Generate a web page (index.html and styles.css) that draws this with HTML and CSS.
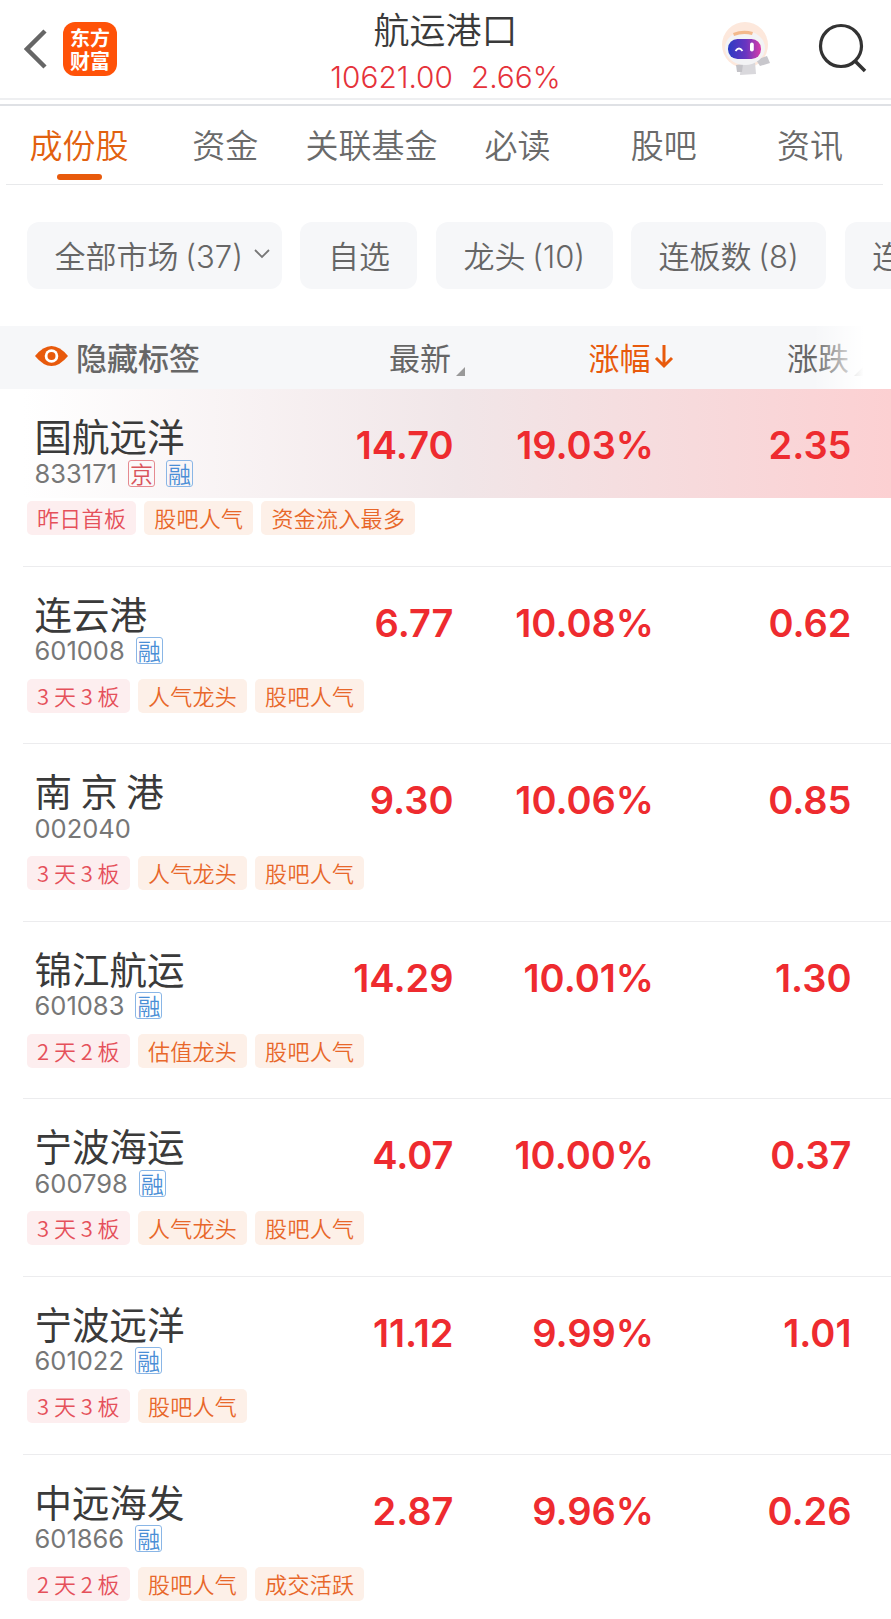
FILE: index.html
```html
<!DOCTYPE html>
<html>
  <head>
    <title>航运港口</title>
    <link rel="stylesheet" href="styles.css">
    <meta name="viewport" content="width=device-width, initial-scale=1" />
  </head>
  <body>
    <div class="header">
      <div class="header-left">
        <svg class="back" width="24" height="42" viewBox="0 0 24 42"><path d="M21 3 L3 21 L21 39" fill="none" stroke="#666" stroke-width="4.5"/></svg>
        <div class="logo"><span>东方</span><span>财富</span></div>
      </div>
      <div class="header-mid">
        <div class="title">航运港口</div>
        <div class="subtitle"><span>10621.00</span><span>2.66%</span></div>
      </div>
      <div class="header-right">
        <svg width="54" height="54" viewBox="0 0 54 54">
          <defs>
            <linearGradient id="visor" x1="0" y1="0" x2="1" y2="0">
              <stop offset="0" stop-color="#2a3bc4"/>
              <stop offset="0.55" stop-color="#6a35c0"/>
              <stop offset="1" stop-color="#d83aa8"/>
            </linearGradient>
          </defs>
          <circle cx="26" cy="23" r="23" fill="#fde8dc"/>
          <path d="M22 42 L36 40 L37 52 L21 53 Z" fill="#d9d8dc"/>
          <path d="M17 43 L24 42 L23 50 L18 50 Z" fill="#c4c3c8"/>
          <path d="M37 38 L48 34 L51 41 L41 44 Z" fill="#c8c7cc"/>
          <ellipse cx="26" cy="26" rx="20" ry="17" fill="#f3f3f5"/>
          <path d="M14 11 Q24 7 34 10 L33 13 Q24 10.500 15 14 Z" fill="#f3b98c"/>
          <rect x="9" y="17" width="33" height="20" rx="9.500" fill="url(#visor)"/>
          <path d="M16.500 29 Q20 24 23.500 29" fill="none" stroke="#fff" stroke-width="1.800"/>
          <rect x="31" y="20.500" width="3.800" height="9" rx="1.900" fill="#fff"/>
        </svg>
        <svg class="search" width="50" height="50" viewBox="0 0 50 50"><circle cx="24" cy="23" r="20.5" fill="none" stroke="#333" stroke-width="3.2"/><path d="M38 38 L48 48" stroke="#333" stroke-width="3.6"/></svg>
      </div>
    </div>
    <div class="header-line"></div>
    <div class="tabs">
      <div class="tab active">成份股<span class="tab-bar"></span></div>
      <div class="tab">资金</div>
      <div class="tab">关联基金</div>
      <div class="tab">必读</div>
      <div class="tab">股吧</div>
      <div class="tab">资讯</div>
    </div>
    <div class="pills">
      <div class="pill first">全部市场 (37)<svg class="chevron" width="18" height="10" viewBox="0 0 18 10"><path d="M2 1 L9 8 L16 1" fill="none" stroke="#777" stroke-width="1.8"/></svg></div>
      <div class="pill">自选</div>
      <div class="pill">龙头 (10)</div>
      <div class="pill">连板数 (8)</div>
      <div class="pill">连板</div>
    </div>
    <div class="thead">
      <div class="thead-name">
        <svg width="35" height="22" viewBox="0 0 35 22"><path d="M1 11 Q17.500 -9 34 11 Q17.500 31 1 11 Z" fill="#e85a0c"/><circle cx="17.500" cy="11" r="6.800" fill="#fff"/><circle cx="17.500" cy="11" r="4" fill="#e85a0c"/></svg>
        隐藏标签
      </div>
      <div class="thead-col">最新<i class="corner"></i></div>
      <div class="thead-col sorted">涨幅<svg width="20" height="26" viewBox="0 0 20 26"><path d="M10 2 V23 M2 15 L10 23 L18 15" fill="none" stroke="#e85a0c" stroke-width="3"/></svg></div>
      <div class="thead-col">涨跌<i class="corner"></i></div>
    </div>

    <div class="row">
      <div class="row-main first">
        <div class="stock">
          <div class="name">国航远洋</div>
          <div class="code">833171<span class="badge red">京</span><span class="badge blue">融</span></div>
        </div>
        <div class="num">14.70</div>
        <div class="num">19.03%</div>
        <div class="num">2.35</div>
      </div>
      <div class="tags"><span class="tag hot">昨日首板</span><span class="tag">股吧人气</span><span class="tag">资金流入最多</span></div>
    </div>
    <div class="row">
      <div class="row-main">
        <div class="stock">
          <div class="name">连云港</div>
          <div class="code">601008<span class="badge blue">融</span></div>
        </div>
        <div class="num">6.77</div>
        <div class="num">10.08%</div>
        <div class="num">0.62</div>
      </div>
      <div class="tags"><span class="tag hot">3 天 3 板</span><span class="tag">人气龙头</span><span class="tag">股吧人气</span></div>
    </div>
    <div class="row">
      <div class="row-main">
        <div class="stock">
          <div class="name">南 京 港</div>
          <div class="code">002040</div>
        </div>
        <div class="num">9.30</div>
        <div class="num">10.06%</div>
        <div class="num">0.85</div>
      </div>
      <div class="tags"><span class="tag hot">3 天 3 板</span><span class="tag">人气龙头</span><span class="tag">股吧人气</span></div>
    </div>
    <div class="row">
      <div class="row-main">
        <div class="stock">
          <div class="name">锦江航运</div>
          <div class="code">601083<span class="badge blue">融</span></div>
        </div>
        <div class="num">14.29</div>
        <div class="num">10.01%</div>
        <div class="num">1.30</div>
      </div>
      <div class="tags"><span class="tag hot">2 天 2 板</span><span class="tag">估值龙头</span><span class="tag">股吧人气</span></div>
    </div>
    <div class="row">
      <div class="row-main">
        <div class="stock">
          <div class="name">宁波海运</div>
          <div class="code">600798<span class="badge blue">融</span></div>
        </div>
        <div class="num">4.07</div>
        <div class="num">10.00%</div>
        <div class="num">0.37</div>
      </div>
      <div class="tags"><span class="tag hot">3 天 3 板</span><span class="tag">人气龙头</span><span class="tag">股吧人气</span></div>
    </div>
    <div class="row">
      <div class="row-main">
        <div class="stock">
          <div class="name">宁波远洋</div>
          <div class="code">601022<span class="badge blue">融</span></div>
        </div>
        <div class="num">11.12</div>
        <div class="num">9.99%</div>
        <div class="num">1.01</div>
      </div>
      <div class="tags"><span class="tag hot">3 天 3 板</span><span class="tag">股吧人气</span></div>
    </div>
    <div class="row">
      <div class="row-main">
        <div class="stock">
          <div class="name">中远海发</div>
          <div class="code">601866<span class="badge blue">融</span></div>
        </div>
        <div class="num">2.87</div>
        <div class="num">9.96%</div>
        <div class="num">0.26</div>
      </div>
      <div class="tags"><span class="tag hot">2 天 2 板</span><span class="tag">股吧人气</span><span class="tag">成交活跃</span></div>
    </div>
  </body>
</html>
```

FILE: styles.css
```css
html, body {margin: 0; padding: 0; height: 1619px; overflow: hidden; background-color: #fff;}
body {width: 891px; font-family: Inter, "Noto Sans CJK SC", sans-serif; color: #333;}

.header {display: grid; grid-template-columns: 1fr auto 1fr; height: 98px; border-bottom: 2px solid #eeeff1;}
.header-left {display: flex; align-items: center; padding-left: 24px;}
.back {margin-right: 15px;}
.logo {display: flex; flex-direction: column; align-items: center; justify-content: center; width: 54px; height: 54px; border-radius: 12px; background-color: #ff5208; color: #fff; font-size: 20px; font-weight: 700; line-height: 23px; font-family: "Noto Sans CJK SC", sans-serif;}
.logo span {display: block; height: 23px;}
.header-mid {text-align: center;}
.title {margin-top: 6px; font-size: 36px; line-height: 44px; font-family: "Noto Sans CJK SC", sans-serif; font-weight: 350; color: #3a3a3a;}
.subtitle {display: flex; gap: 18px; margin-top: 9px; font-size: 29.8px; line-height: 36px; font-weight: 350; color: #e5323a;}
.header-right {display: flex; align-items: center; justify-content: flex-end; gap: 44px; padding-right: 24px;}
.search {margin-top: -2px;}
.header-line {height: 2px; margin-top: 4px; background-color: #dfe1e5;}

.tabs {display: flex; margin: 0 8px 0 6px; height: 78px; border-bottom: 1px solid #e8e9eb;}
.tab {flex: 1; display: flex; flex-direction: column; align-items: center; padding-top: 16px; font-size: 33px; line-height: 44px; color: #6a6a6a; font-family: "Noto Sans CJK SC", sans-serif; font-weight: 350;}
.tab.active {color: #e2610f;}
.tab-bar {width: 45px; height: 6px; margin-top: 8px; border-radius: 3px; background-color: #e85a0c;}

.pills {display: flex; gap: 18.5px; padding: 37px 0 0 27px; overflow: hidden; white-space: nowrap;}
.pill {display: flex; align-items: center; flex-shrink: 0; box-sizing: border-box; height: 67px; padding: 0 27.5px 3px; border-radius: 12px; background-color: #f6f7f9; font-size: 31px; color: #666; font-weight: 350; word-spacing: -2px;}
.pill.first {padding-right: 11px;}
.chevron {margin-left: 10px;}

.thead {position: relative; display: grid; grid-template-columns: 219px 200px 200.5px 197.5px; margin-top: 37px; height: 63px; box-sizing: border-box; padding: 0 0 3px 34px; background-color: #f6f7f9; font-size: 31px; color: #666; align-items: center; overflow: hidden;}
.thead::after {content: ""; position: absolute; top: 0; bottom: 0; right: 0; width: 78px; background: linear-gradient(to right, rgba(255,255,255,0), #fff 65%);}
.thead-name {display: flex; align-items: center; gap: 7px; font-weight: 500; font-family: "Noto Sans CJK SC", sans-serif;}
.thead-col {position: relative; text-align: right; font-family: "Noto Sans CJK SC", sans-serif; font-weight: 400; padding-right: 2px;}
.thead-col.sorted {color: #e85a0c; display: flex; justify-content: flex-end; align-items: center; gap: 3px; margin-right: -22px;}
.corner {position: absolute; right: -12px; bottom: 3px; width: 0; height: 0; border-left: 9px solid transparent; border-bottom: 9px solid #999;}

.row {margin-left: 23px; height: 177.6px; box-sizing: border-box; border-bottom: 1px solid #ececee;}
.row-main {display: grid; grid-template-columns: 219px 200px 200.5px 197.5px; height: 109px; padding-left: 11.5px;}
.row-main.first {background: linear-gradient(to right, #fff, #f1e6e8 50%, #fcd0d2);}
.stock {padding-top: 24px;}
.name {font-size: 37.5px; line-height: 44px; color: #3a3a3a; font-family: "Noto Sans CJK SC", sans-serif; font-weight: 400; white-space: nowrap;}
.code {display: flex; align-items: center; height: 30px; margin-top: 1px; font-size: 25.5px; color: #777; white-space: nowrap;}
.badge {display: inline-block; box-sizing: border-box; width: 27px; height: 27px; margin-left: 11px; border: 1px solid; border-radius: 3px; text-align: center; font-size: 23px; line-height: 24px; font-family: "Noto Sans CJK SC", sans-serif; font-weight: 350;}
.badge.red {color: #d9545c; border-color: #e58a90;}
.badge.blue {color: #4a8ed6; border-color: #8ab6e6;}
.num {padding-top: 34px; text-align: right; font-size: 38px; line-height: 44px; font-weight: 580; color: #ee2b2f;}

.tags {display: flex; gap: 8px; margin: 3px 0 0 4px;}
.tag {display: flex; align-items: center; box-sizing: border-box; height: 34px; padding: 0 10px 2px; border-radius: 5px; background-color: #fdf0e8; color: #e8672a; font-size: 22px; letter-spacing: 0.3px; word-spacing: -0.7px; font-family: "Noto Sans CJK SC", sans-serif; font-weight: 350;}
.tag.hot {background-color: #fdeeef; color: #e5505a;}
```
